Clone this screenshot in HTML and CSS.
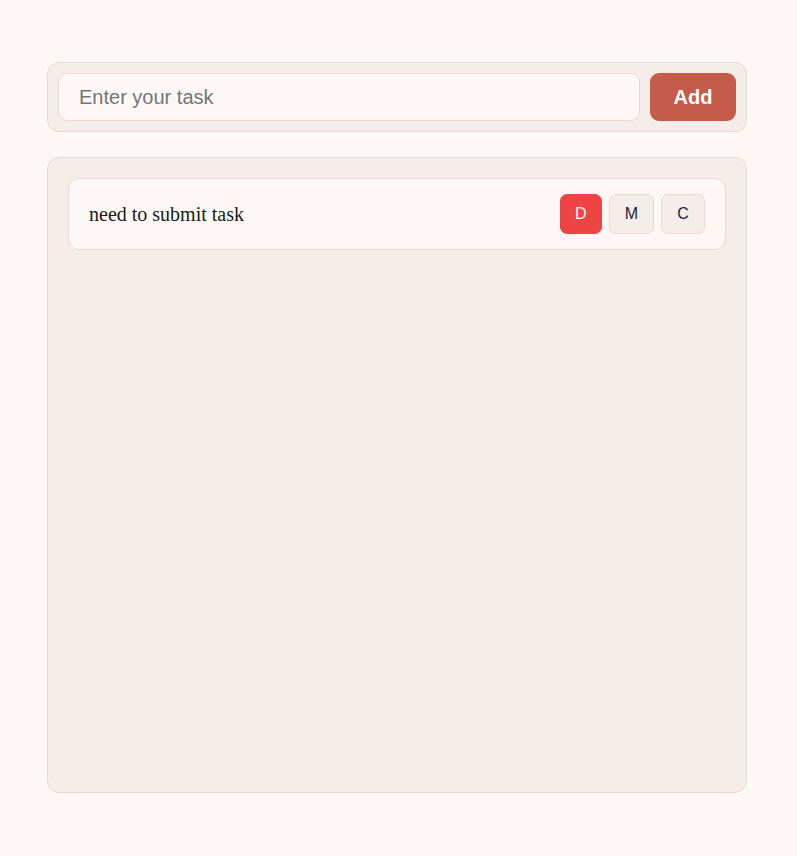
FILE: index.html
```html
<!DOCTYPE html>
<html lang="en">
<head>
<meta charset="utf-8">
<title>Tasks</title>
<link rel="stylesheet" href="styles.css">
</head>
<body>
<main class="app">
  <form class="task-form">
    <input class="task-input" type="text" placeholder="Enter your task">
    <button class="add-btn" type="button">Add</button>
  </form>
  <section class="task-list">
    <div class="task-item">
      <span class="task-text">need to submit task</span>
      <div class="task-actions">
        <button class="act act-d" type="button">D</button>
        <button class="act" type="button">M</button>
        <button class="act" type="button">C</button>
      </div>
    </div>
  </section>
</main>
</body>
</html>
```

FILE: styles.css
```css
* { box-sizing: border-box; }

html, body {
  margin: 0;
  background: #fdf8f5;
}

body {
  padding: 62px 3px 0 0;
  font-family: "Liberation Serif", "Times New Roman", serif;
}

.app {
  width: 700px;
  margin: 0 auto;
}

.task-form {
  display: flex;
  gap: 10px;
  padding: 10px;
  background: #f5ede9;
  border: 1px solid #e8d9d3;
  border-radius: 12px;
  margin: 0;
}

.task-input {
  flex: 1;
  height: 48px;
  padding: 0 20px;
  font-family: "Liberation Sans", Arial, sans-serif;
  font-size: 20px;
  color: #222;
  background: #fdf8f5;
  border: 1px solid #e8d9d3;
  border-radius: 9px;
  outline: none;
}

.task-input::placeholder {
  color: #757575;
}

.add-btn {
  width: 86px;
  height: 48px;
  border: none;
  border-radius: 9px;
  background: #c65b4a;
  color: #fff;
  font-family: "Liberation Sans", Arial, sans-serif;
  font-weight: bold;
  font-size: 20px;
  cursor: pointer;
}

.task-list {
  margin-top: 25px;
  height: 636px;
  padding: 20px;
  background: #f5ede9;
  border: 1px solid #e8d9d3;
  border-radius: 12px;
}

.task-item {
  display: flex;
  align-items: center;
  justify-content: space-between;
  padding: 15px 20px;
  background: #fdf8f5;
  border: 1px solid #e8d9d3;
  border-radius: 11px;
}

.task-text {
  font-size: 20px;
  color: #1a1a1a;
}

.task-actions {
  display: flex;
  gap: 7px;
}

.act {
  height: 40px;
  min-width: 44px;
  padding: 0 15px;
  font-family: "Liberation Sans", Arial, sans-serif;
  font-size: 16px;
  color: #1c1f3a;
  background: #f5ede9;
  border: 1px solid #e8d9d3;
  border-radius: 7px;
  cursor: pointer;
}

.act-d {
  min-width: 42px;
  padding: 0 14px;
  background: #ef4444;
  border-color: #ef4444;
  color: #fff;
}
```
